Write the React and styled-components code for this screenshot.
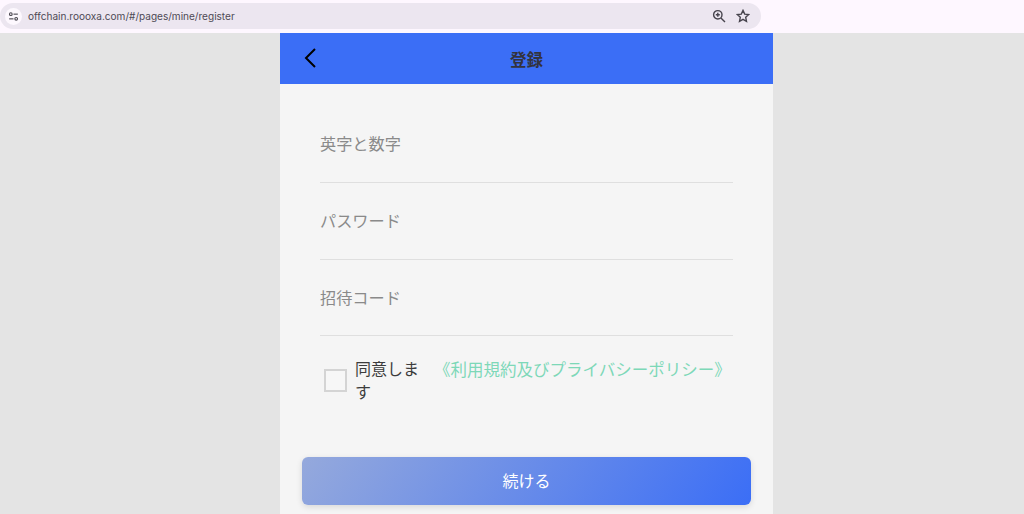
import React from 'react';
import styled, { createGlobalStyle } from 'styled-components';

const GlobalStyle = createGlobalStyle`
  html, body {
    margin: 0;
    padding: 0;
    height: 100%;
    overflow: hidden;
    background: #e4e4e4;
    font-family: "Noto Sans CJK JP", "Liberation Sans", sans-serif;
  }
`;

const Screen = styled.div`
  width: 1024px;
  height: 514px;
  display: flex;
  flex-direction: column;
  overflow: hidden;
`;

const BrowserBar = styled.div`
  height: 33px;
  flex: none;
  box-sizing: border-box;
  background: #fef7ff;
  padding: 3px 0 4px 0;
`;

const AddressPill = styled.div`
  width: 761px;
  height: 26px;
  box-sizing: border-box;
  background: #ece6f0;
  border-radius: 13px;
  display: flex;
  align-items: center;
  padding: 0 11px 0 5px;
`;

const SiteBadge = styled.div`
  width: 17px;
  height: 17px;
  border-radius: 50%;
  background: #fdf8fe;
  display: flex;
  align-items: center;
  justify-content: center;
  flex: none;
`;

const Url = styled.span`
  margin-left: 6px;
  flex: 1;
  font-family: Inter, "Liberation Sans", sans-serif;
  font-size: 10.05px;
  color: #4e4a55;
`;

const BarIcon = styled.svg`
  width: 14px;
  height: 14px;
  margin-left: 10px;
  fill: none;
  stroke: #47444d;
  stroke-width: 1.4;
`;

const Page = styled.div`
  flex: 1;
  display: flex;
  padding-left: 280px;
  min-height: 0;
`;

const Panel = styled.div`
  width: 493px;
  background: #f5f5f5;
  display: flex;
  flex-direction: column;
`;

const Header = styled.div`
  height: 51px;
  flex: none;
  background: #3b6ef6;
  position: relative;
  display: flex;
  align-items: center;
  justify-content: center;
`;

const BackIcon = styled.svg`
  position: absolute;
  left: 22px;
  top: 13px;
  width: 18px;
  height: 24px;
  fill: none;
  stroke: #000;
  stroke-width: 2;
`;

const Title = styled.h1`
  margin: 0;
  font-size: 16.5px;
  font-weight: 700;
  color: #33333d;
`;

const Form = styled.form`
  display: flex;
  flex-direction: column;
  padding: 22px 40px 0;
`;

const Field = styled.input`
  display: block;
  width: 100%;
  height: 76.8px;
  box-sizing: border-box;
  border: none;
  border-bottom: 1px solid #dfdfdf;
  background: transparent;
  outline: none;
  padding: 0 0 1px 0;
  font-family: inherit;
  font-size: 16.2px;
  &::placeholder {
    color: #8a8a8a;
    opacity: 1;
  }
`;

const AgreeRow = styled.div`
  display: flex;
  align-items: flex-start;
  padding: 20.4px 0 0 3.5px;
`;

const CheckBox = styled.span`
  width: 23px;
  height: 23px;
  box-sizing: border-box;
  flex: none;
  margin-top: 12px;
  border: 2px solid #d4d4d4;
  background: #f7f7f7;
`;

const AgreeText = styled.span`
  width: 70px;
  flex: none;
  margin-left: 8.5px;
  font-size: 16px;
  line-height: 23px;
  color: #3c3c3c;
`;

const TermsLink = styled.a`
  margin-left: 9px;
  padding-top: 1px;
  font-size: 16.5px;
  line-height: 23px;
  color: #7dd8b8;
  white-space: nowrap;
`;

const Submit = styled.button`
  display: block;
  width: 449px;
  height: 48px;
  margin: 54px 0 0 22px;
  padding: 0 0 2px;
  flex: none;
  border: none;
  border-radius: 6px;
  background: linear-gradient(125deg, #95a9dc 0%, #3b6ef6 100%);
  box-shadow: 0 2px 6px rgba(0, 0, 0, 0.12);
  color: #fff;
  font-family: inherit;
  font-size: 16px;
`;

const App = () => {
  return (
    <Screen>
      <GlobalStyle />
      <BrowserBar>
        <AddressPill>
          <SiteBadge>
            <svg width="11" height="11" viewBox="0 0 14 14" fill="none" stroke="#47444d" strokeWidth="1.4">
              <circle cx="3.6" cy="4" r="1.7" />
              <path d="M7 4h5.5" />
              <circle cx="10.4" cy="10" r="1.7" />
              <path d="M1.5 10H7" />
            </svg>
          </SiteBadge>
          <Url>offchain.roooxa.com/#/pages/mine/register</Url>
          <BarIcon viewBox="0 0 14 14">
            <circle cx="5.8" cy="5.8" r="4.2" />
            <path d="M8.9 8.9L13 13M3.8 5.8h4M5.8 3.8v4" />
          </BarIcon>
          <BarIcon viewBox="0 0 14 14">
            <path d="M7 1.4l1.7 3.7 4 .5-3 2.7.8 4L7 10.3l-3.5 2 .8-4-3-2.7 4-.5z" />
          </BarIcon>
        </AddressPill>
      </BrowserBar>
      <Page>
        <Panel>
          <Header>
            <BackIcon viewBox="0 0 18 24">
              <path d="M13 3L4 12l9 9" />
            </BackIcon>
            <Title>登録</Title>
          </Header>
          <Form>
            <Field placeholder="英字と数字" />
            <Field placeholder="パスワード" />
            <Field placeholder="招待コード" />
            <AgreeRow>
              <CheckBox />
              <AgreeText>同意します</AgreeText>
              <TermsLink>《利用規約及びプライバシーポリシー》</TermsLink>
            </AgreeRow>
          </Form>
          <Submit type="button">続ける</Submit>
        </Panel>
      </Page>
    </Screen>
  );
};

export default App;
